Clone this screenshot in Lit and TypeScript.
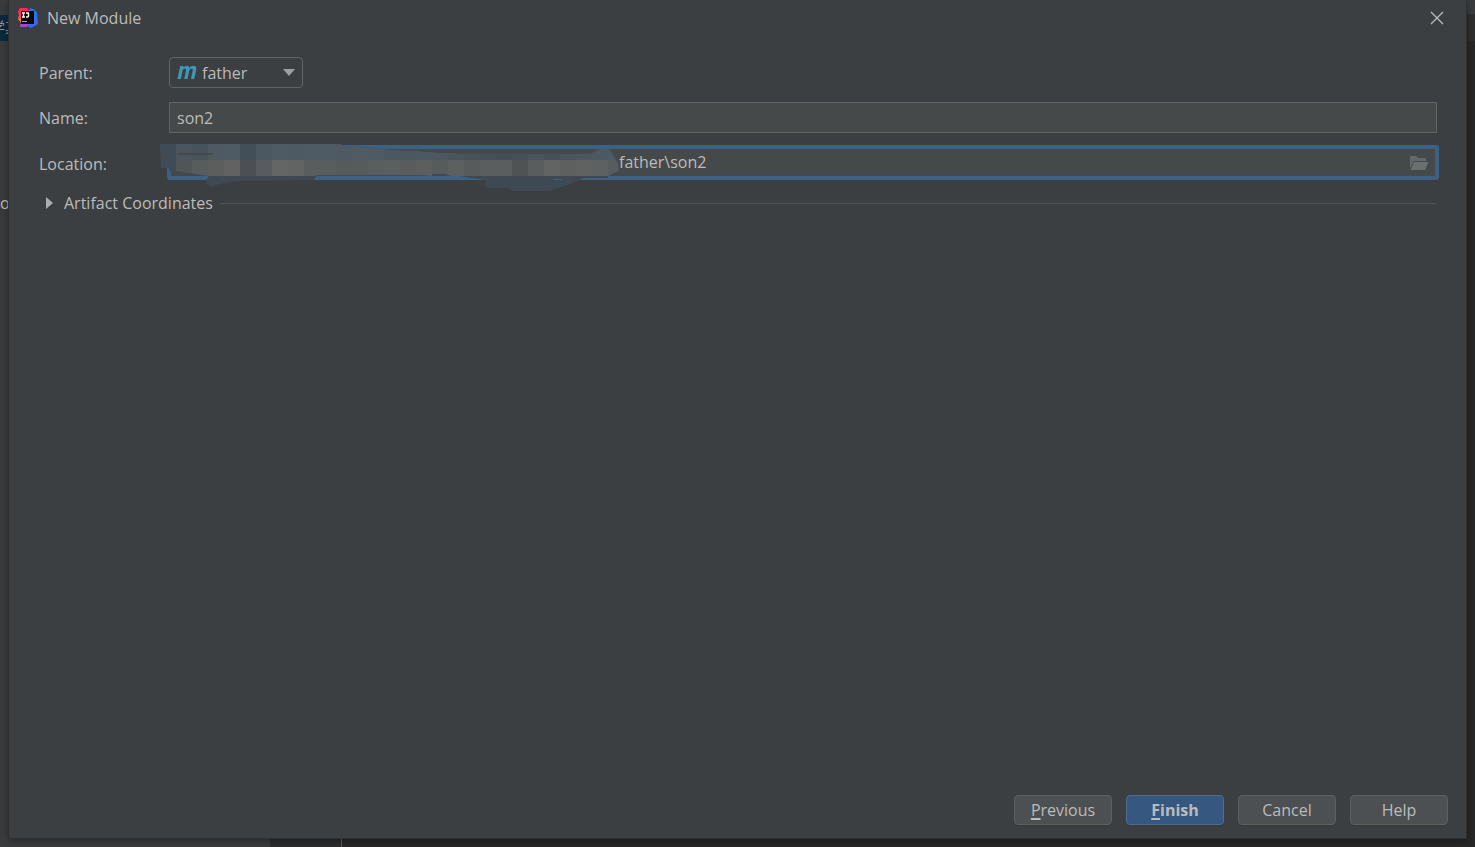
import { LitElement, html, css, svg } from "lit";
import { customElement, state } from "lit/decorators.js";

const UPPER = ["#3f4b57", "#4a5560", "#46525c", "#4f5963", "#4f5b64", "#434f58", "#4c5861", "#4f5b64", "#4e5a63", "#4e5b64", "#4e5b64", "#4e5a63", "#505b66", "#4e5a64", "#4c5860", "#4b5861", "#4d5962", "#4c5760", "#4a545c", "#47535b", "#46525b", "#434f58", "#46525b", "#49555f", "#46525b", "#48545e", "#4b5760", "#4d5962", "#4f5b64"];
const LOWER = ["#3f4b57", "#525556", "#595c5c", "#5c5e5e", "#626262", "#4c5052", "#595c5e", "#646666", "#626363", "#5a5d5e", "#595d5d", "#575a5b", "#585b5c", "#5a5e5e", "#5b5f5f", "#595b5c", "#5d5f5f", "#585b5b", "#5e6060", "#585b5b", "#5b5e5e", "#5b5e5e", "#505354", "#5a5d5d", "#626464", "#5e6060", "#606262", "#5e6161", "#585c5e"];

@customElement("app-root")
export class AppRoot extends LitElement {
  @state() private expanded = false;

  static styles = css`
    :host {
      display: block;
      font: 16px/24px "Open Sans", "Noto Sans", "Noto Sans CJK SC", sans-serif;
      color: #bbbbbb;
    }
    * { box-sizing: border-box; }
    .desktop {
      position: relative;
      display: flex;
      min-height: 100vh;
      padding: 0 9px 9px 9px;
      overflow: hidden;
      background: #272727;
    }
    .behind { position: absolute; inset: 0; }
    .side { position: absolute; left: 0; top: 0; bottom: 0; width: 270px; background: #3a3b3d; }
    .gutter { position: absolute; left: 270px; top: 0; bottom: 0; width: 72px; background: #2b2c2e; border-right: 1px solid #5b5b5b; }
    .edge { position: absolute; right: 0; top: 0; width: 9px; height: 41px; background: #2e2e2e; border-top: 14px solid #393b3d; }
    .tab { position: absolute; left: -9px; top: 15px; width: 100px; height: 26px; background: #0d293e; color: #8f9496; font-size: 14px; white-space: nowrap; }
    .stray { position: absolute; left: 0; top: 191px; }
    .dialog {
      position: relative;
      flex: 1;
      display: flex;
      flex-direction: column;
      background: #3c3f41;
      box-shadow: 0 0 0 1px #2f3031, 0 2px 8px rgba(0, 0, 0, 0.4);
    }
    .title { display: flex; align-items: center; height: 36px; padding: 0 21px 0 8px; gap: 8px; }
    .title h1 { flex: 1; margin: 0; font-size: 16px; font-weight: 400; }
    .close { width: 16px; height: 16px; padding: 0; border: 0; background: none; color: #bbbbbb; }
    svg { display: block; }
    .form { display: grid; grid-template-columns: 130px 1fr; row-gap: 14px; padding: 21px 29px 0 30px; align-items: center; }
    .combo { position: relative; width: 134px; height: 31px; }
    .combo select {
      width: 100%; height: 100%; padding: 0 24px 0 32px; appearance: none; font: inherit;
      color: inherit; background: #3c3f41; border: 1px solid #646464; border-radius: 4px; outline: none;
    }
    .module, .arrow { position: absolute; pointer-events: none; }
    .module { left: 8px; top: 8px; }
    .arrow { right: 8px; top: 12px; }
    .text { display: block; width: 100%; height: 31px; padding: 0 7px; border: 1px solid #646464; background: #45494a; color: inherit; font: inherit; outline: none; }
    .location { position: relative; margin: -2px -2px 0 -2px; }
    .location .text { height: 35px; padding: 0 36px 2px 448px; border: 4px solid #3d6185; border-radius: 3px; }
    .browse { position: absolute; right: 10px; top: 10px; width: 20px; height: 16px; padding: 0; border: 0; background: none; }
    .cover { position: absolute; left: -7px; top: -1px; pointer-events: none; }
    .section { display: flex; align-items: center; gap: 7px; padding: 11px 30px 0; }
    .section button { display: flex; align-items: center; gap: 11px; padding: 0 0 0 7px; border: 0; background: none; color: inherit; font: inherit; white-space: nowrap; }
    .rule { flex: 1; height: 2px; border-bottom: 1px solid #515355; }
    .open svg { transform: rotate(90deg); }
    .actions { display: flex; justify-content: flex-end; gap: 14px; margin-top: auto; padding: 0 18px 13px; }
    .action {
      width: 98px; height: 30px; padding: 0; border: 1px solid #5e6060; border-radius: 4px;
      background: #4c5052; color: inherit; font: inherit; box-shadow: 0 1px 1px #36393a;
    }
    .primary { background: #365880; border-color: #4c708c; font-weight: 700; }
    .key { text-decoration: underline; text-decoration-thickness: 2px; text-underline-offset: 2px; text-decoration-skip-ink: none; }
  `;

  private cover() {
    return html`<svg class="cover" width="460" height="48" viewBox="160 144 460 48" shape-rendering="crispEdges" aria-hidden="true">
      <defs><clipPath id="smear"><path d="M160 144H340L345 146L360 147L375 148L390 150L415 151L440 153L455 153L460 154H590L596 151L600 149H609L614 156L618 164L619 171L611 174L607 178H584L570 184L550 191H512L508 188H487L484 184L486 181L480 179L470 178L460 176H451L445 174H432V176L420 175H317L314 180L235 181L220 184L211 187L206 184V180L209 176L195 174L176 171H169V168H161Z"/></clipPath></defs>
      <g clip-path="url(#smear)">
        <rect x="160" y="144" width="460" height="48" fill="#3f4953"/>
        ${UPPER.map((c, i) => svg`<rect x=${160 + i * 16} y="144" width="16" height="16" fill=${c}/>`)}
        ${LOWER.map((c, i) => svg`<rect x=${160 + i * 16} y="160" width="16" height="16" fill=${c}/>`)}
      </g>
      <path d="M160 154H166M177 154H213" stroke="#45494a" stroke-width="2"/>
      <path d="M553 179.500H562" stroke="#3d6185"/>
    </svg>`;
  }

  render() {
    return html`
      <div class="desktop">
        <div class="behind" aria-hidden="true">
          <div class="side"></div><div class="gutter"></div><div class="edge"></div>
          <div class="tab">学其</div><span class="stray">o</span>
        </div>
        <main class="dialog">
          <header class="title">
            <svg width="22" height="22" viewBox="0 0 22 22" aria-hidden="true">
              <defs><linearGradient id="warm" x1="0" y1="0" x2="0" y2="1"><stop offset="0" stop-color="#fe2857"/><stop offset=".4" stop-color="#f83b50"/><stop offset=".65" stop-color="#fc7c2b"/><stop offset="1" stop-color="#a53de0"/></linearGradient>
              <linearGradient id="cool" x1="0" y1="0" x2="0" y2="1"><stop offset="0" stop-color="#2478e8"/><stop offset="1" stop-color="#4262ee"/></linearGradient></defs>
              <path d="M3 1H10L15 7L9 17L3 20L4 16L1 12L2 8L1 5Z" fill="url(#warm)"/>
              <path d="M13 1L16 2L20 5L21 17L14 21L8 18L4 20V16H15L12 4Z" fill="url(#cool)"/>
              <path d="M4 16L3 20L10 20L12 16Z" fill="#a744db"/>
              <rect x="4" y="4" width="13" height="13" fill="#080808"/>
              <path d="M5 6H8M6.500 6V10M5 10H8M9 6H12M11.500 6V9Q11.500 10.200 9 10" fill="none" stroke="#fff" stroke-width="1.400"/>
              <path d="M5 14.500H10" stroke="#aaa" stroke-width="1"/>
            </svg>
            <h1>New Module</h1>
            <button class="close" aria-label="Close"><svg width="16" height="16" viewBox="0 0 16 16"><path d="M2 2L14 14M14 2L2 14" stroke="currentColor" stroke-width="1.300"/></svg></button>
          </header>
          <section class="form">
            <label for="parent">Parent:</label>
            <div class="combo">
              <select id="parent"><option>father</option></select>
              <svg class="module" width="20" height="15" viewBox="0 0 20 15" aria-hidden="true"><path d="M3.200 1H6.500L6.200 2.600Q7.800 .8 9.800 .8Q12 .8 12.300 2.800Q13.900 .8 16.300 .8Q20 .8 19.200 4.800L17.300 14H13.900L15.700 5.400Q16.100 3.500 14.700 3.500Q12.700 3.500 12.100 6.300L10.500 14H7.200L9 5.400Q9.400 3.500 8 3.500Q6 3.500 5.300 6.700L3.800 14H.4Z" fill="#3e97b5"/></svg>
              <svg class="arrow" width="12" height="7" viewBox="0 0 12 7" aria-hidden="true"><path d="M0 0H12L6 7Z" fill="#9da0a2"/></svg>
            </div>
            <label for="name">Name:</label>
            <input id="name" class="text" .value=${"son2"}>
            <label for="location">Location:</label>
            <div class="location">
              <input id="location" class="text" .value=${"father\\son2"}>
              ${this.cover()}
              <button class="browse" aria-label="Browse"><svg width="20" height="16" viewBox="0 0 20 16"><path d="M1 1H7L9 3H17V6H5L1 13Z" fill="#63686b"/><path d="M5 7H19.500L16 15H1.500Z" fill="#6a6f72"/></svg></button>
            </div>
          </section>
          <section class="section">
            <button class=${this.expanded ? "open" : ""} aria-expanded=${this.expanded} @click=${() => (this.expanded = !this.expanded)}>
              <svg width="7" height="12" viewBox="0 0 7 12" aria-hidden="true"><path d="M0 0L7 6L0 12Z" fill="#adadad"/></svg>Artifact Coordinates
            </button>
            <div class="rule"></div>
          </section>
          <footer class="actions">
            <button class="action"><span class="key">P</span>revious</button>
            <button class="action primary"><span class="key">F</span>inish</button>
            <button class="action">Cancel</button>
            <button class="action">Help</button>
          </footer>
        </main>
      </div>`;
  }
}
